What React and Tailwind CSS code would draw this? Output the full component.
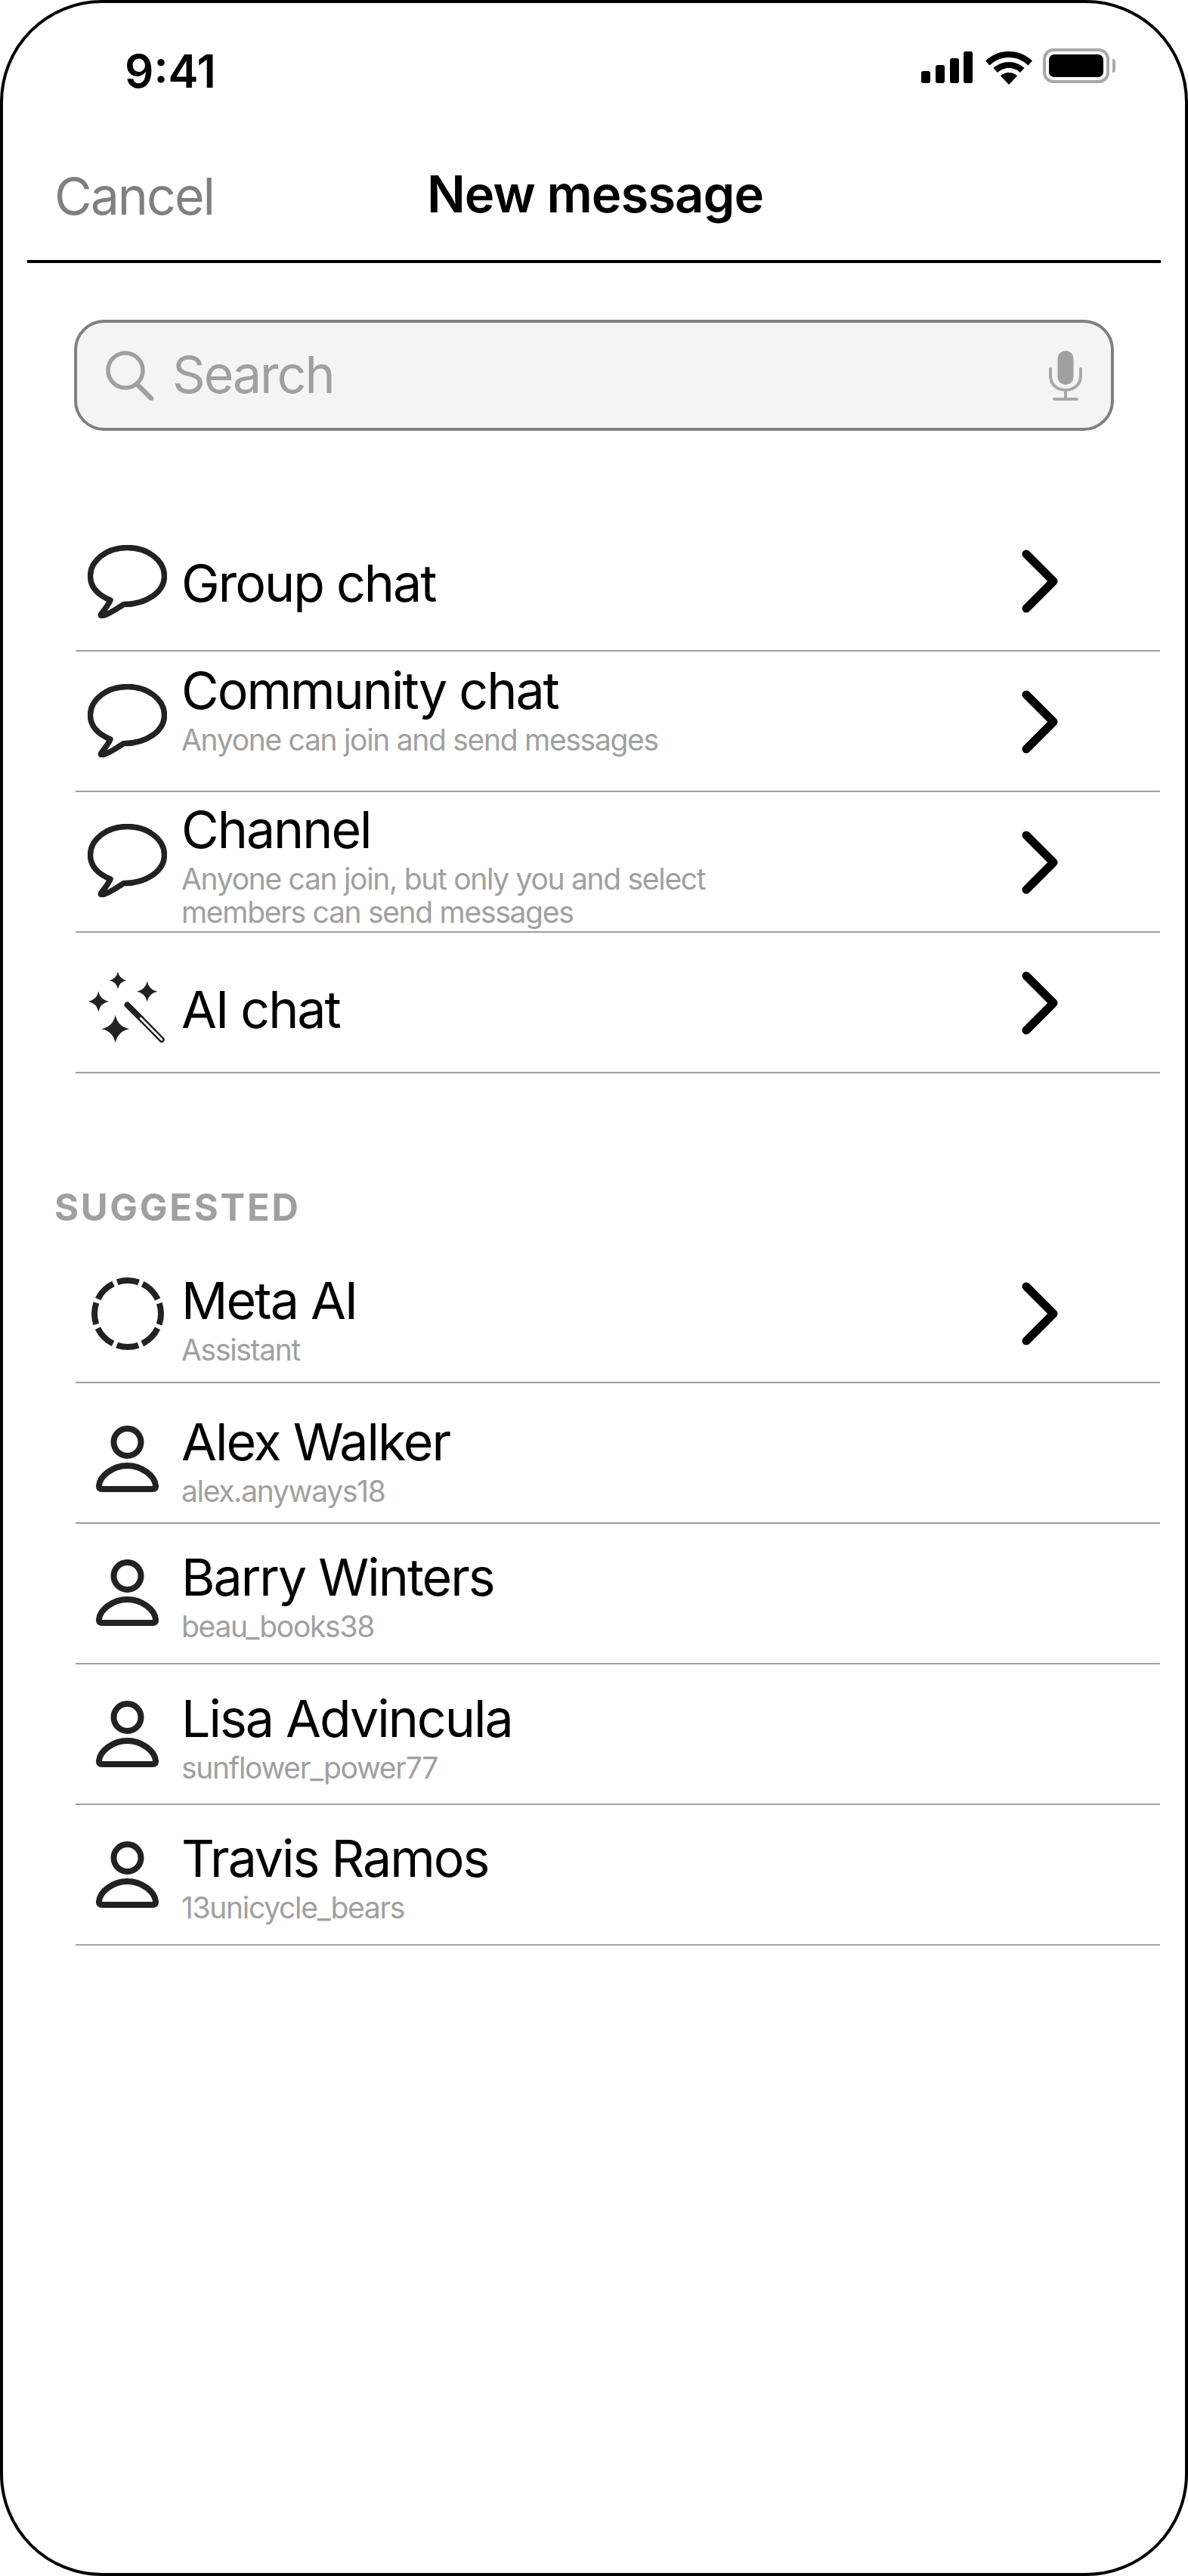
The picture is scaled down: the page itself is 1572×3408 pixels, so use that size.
const FONT = 'font-["Inter",sans-serif]'

function Bubble() {
  return (
    <svg className="w-[105px] h-[97px]" viewBox="0 0 105 97" fill="none" stroke="#222222" strokeWidth="7.500" strokeLinejoin="round">
      <path d="M48 78.5C76 79 101.5 63 101.5 41C101.5 20 79 3.5 52.5 3.5C26 3.5 3.5 20 3.5 41C3.5 55 13 66 30 73C27 80 22 86 18 91C16 94 19 94 22 93C31 90 40 83 48 78.5Z" />
    </svg>
  )
}

function sparkle(cx, cy, r) {
  const k = r * 0.17
  return `M${cx} ${cy - r}Q${cx + k} ${cy - k} ${cx + r} ${cy}Q${cx + k} ${cy + k} ${cx} ${cy + r}Q${cx - k} ${cy + k} ${cx - r} ${cy}Q${cx - k} ${cy - k} ${cx} ${cy - r}Z`
}

function Wand() {
  return (
    <svg className="w-[115px] h-[100px]" viewBox="50 45 115 100" fill="#222222">
      <path d={sparkle(95, 58, 11.5)} />
      <path d={sparkle(133.7, 72.7, 13.5)} />
      <path d={sparkle(69.3, 86, 13.5)} />
      <path d={sparkle(91.7, 122.3, 18.5)} />
      <path d="M107.5 90.5L125 108" stroke="#222222" strokeWidth="8" strokeLinecap="round" />
      <path d="M125 108L153 136.5" stroke="#222222" strokeWidth="7.5" strokeLinecap="round" />
      <path d="M125 108L153 136.5" stroke="#ffffff" strokeWidth="2.5" strokeLinecap="round" />
    </svg>
  )
}

function DashedCircle() {
  return (
    <svg className="w-[96px] h-[96px]" viewBox="0 0 96 96" fill="none" stroke="#222222" strokeWidth="8">
      <circle cx="48" cy="48" r="44" strokeDasharray="29 5.560" strokeDashoffset="14.5" />
    </svg>
  )
}

function Person() {
  return (
    <svg className="w-[83px] h-[88px]" viewBox="0 0 83 88" fill="none" stroke="#222222" strokeWidth="8" strokeLinejoin="round">
      <circle cx="41.5" cy="22" r="18" />
      <path d="M41.5 53C22 53 5 67 4 79.5C3.8 83 5 84 8 84H75C78 84 79.2 83 79 79.5C78 67 61 53 41.5 53Z" />
    </svg>
  )
}

function Chevron() {
  return (
    <svg className="w-[50px] h-[84px] shrink-0" viewBox="0 0 50 84" fill="none" stroke="#000000" strokeWidth="11" strokeLinecap="round" strokeLinejoin="round">
      <path d="M7 6L43 42L7 78" />
    </svg>
  )
}

function Row({ icon, iconTop, textTop, title, sub, chevronTop }) {
  return (
    <div className="h-[186px] flex items-start border-b-2 border-[#a0a0a0]">
      <div className={`w-[140px] shrink-0 flex justify-center pr-[3px] ${iconTop}`}>{icon}</div>
      <div className={`max-w-[720px] ${textTop}`}>
        <div className="text-[68px] leading-[72px] tracking-[-2px] text-black">{title}</div>
        {sub && <div className="mt-2 text-[39px] leading-[44px] tracking-[-1.3px] text-[#a0a0a0]">{sub}</div>}
      </div>
      {chevronTop && (
        <div className={`ml-auto mr-[134px] ${chevronTop}`}>
          <Chevron />
        </div>
      )}
    </div>
  )
}

export default function App() {
  return (
    <div className={`w-[1572px] h-[3408px] bg-white border-[4px] border-black rounded-[135px] overflow-hidden ${FONT}`}>
      {/* Status bar */}
      <div className="h-[168px] flex justify-between pl-[161px] pr-[92px] pt-[56px]">
        <div className="text-[60px] leading-[68px] font-semibold text-black">9:41</div>
        <div className="flex items-start gap-[17px] pt-[8px]">
          <svg className="w-[68px] h-[44px]" viewBox="0 0 68 44" fill="#000000">
            <rect x="0" y="26" width="12" height="16" rx="3" />
            <rect x="19" y="18" width="12" height="24" rx="3" />
            <rect x="38" y="9" width="12" height="33" rx="3" />
            <rect x="56" y="0" width="12" height="42" rx="3" />
          </svg>
          <svg className="w-[62px] h-[44px]" viewBox="0 0 62 44" fill="#000000">
            <path d="M31 0C19 0 8.500 4.500 0 12.500L5.500 18.500C12.500 12 21 8 31 8C41 8 49.500 12 56.500 18.500L62 12.500C53.500 4.500 43 0 31 0Z" />
            <path d="M31 14C23 14 16 17 10.500 22L16 28C20 24.500 25 22 31 22C37 22 42 24.500 46 28L51.500 22C46 17 39 14 31 14Z" />
            <path d="M31 28C26.500 28 23 29.500 20 32.500L31 44L42 32.500C39 29.500 35.500 28 31 28Z" />
          </svg>
          <div className="flex items-center -mt-[4px] -ml-[3px]">
            <div className="w-[88px] h-[46px] rounded-[14px] border-[4px] border-[#a8a8a8] p-[4px]">
              <div className="w-full h-full rounded-[7px] bg-black" />
            </div>
            <div className="ml-[4px] w-[4px] h-[18px] rounded-r-[3px] bg-[#a8a8a8]" />
          </div>
        </div>
      </div>

      {/* Nav */}
      <div className="mx-[32px] h-[176px] border-b-4 border-black grid grid-cols-[1fr_auto_1fr] items-start pt-[39px]">
        <div className="mt-[8px] pl-[36px] text-[68px] leading-[80px] tracking-[-2px] text-[#808080]">Cancel</div>
        <div className="mt-[6px] pl-[3px] text-[67px] leading-[80px] tracking-[-1px] font-semibold text-black">New message</div>
        <div />
      </div>

      {/* Search */}
      <div className="mt-[75px] ml-[94px] w-[1376px] h-[147px] rounded-[40px] border-[4px] border-[#808080] bg-[#f4f4f4] flex items-center pl-[38px] pr-[38px]">
        <svg className="w-[64px] h-[66px] shrink-0" viewBox="0 0 64 66" fill="none" stroke="#a0a0a0" strokeWidth="5.500" strokeLinecap="round">
          <circle cx="26" cy="26" r="23" />
          <path d="M42 45L60 63" strokeWidth="6.500" />
        </svg>
        <div className="ml-[24px] pb-[3px] flex-1 text-[68px] leading-[80px] tracking-[-2px] text-[#a0a0a0]">Search</div>
        <svg className="w-[44px] h-[66px] shrink-0" viewBox="0 0 44 66" fill="none" stroke="#a8a8a8" strokeWidth="4" strokeLinecap="round">
          <rect x="11.500" y="0" width="21" height="45" rx="10.500" fill="#a0a0a0" stroke="none" />
          <path d="M2 24V33C2 44 10 52 22 52C34 52 42 44 42 33V24" />
          <path d="M22 52V63M7 64H37" />
        </svg>
      </div>

      {/* Chat types */}
      <div className="mt-[106px] ml-[96px] mr-[33px]">
        <Row icon={<Bubble />} iconTop="mt-[45px]" textTop="mt-[59px]" title="Group chat" chevronTop="mt-[51px]" />
        <Row icon={<Bubble />} iconTop="mt-[43px]" textTop="mt-[15px]" title="Community chat" sub="Anyone can join and send messages" chevronTop="mt-[51px]" />
        <Row icon={<Bubble />} iconTop="mt-[42px]" textTop="mt-[13px]" title="Channel" sub="Anyone can join, but only you and select members can send messages" chevronTop="mt-[51px]" />
        <Row icon={<Wand />} iconTop="mt-[50px]" textTop="mt-[65px]" title="AI chat" chevronTop="mt-[51px]" />
      </div>

      {/* Suggested */}
      <div className="mt-[150px] pl-[68px] text-[49px] leading-[56px] font-bold tracking-[2.700px] text-[#a0a0a0]">SUGGESTED</div>
      <div className="mt-[18px] ml-[96px] mr-[33px]">
        <Row icon={<DashedCircle />} iconTop="mt-[46px]" textTop="mt-[40px]" title="Meta AI" sub="Assistant" chevronTop="mt-[52px]" />
        <Row icon={<Person />} iconTop="mt-[56px]" textTop="mt-[41px]" title="Alex Walker" sub="alex.anyways18" />
        <Row icon={<Person />} iconTop="mt-[47px]" textTop="mt-[34px]" title="Barry Winters" sub="beau_books38" />
        <Row icon={<Person />} iconTop="mt-[48px]" textTop="mt-[35px]" title="Lisa Advincula" sub="sunflower_power77" />
        <Row icon={<Person />} iconTop="mt-[48px]" textTop="mt-[34px]" title="Travis Ramos" sub="13unicycle_bears" />
      </div>
    </div>
  )
}
